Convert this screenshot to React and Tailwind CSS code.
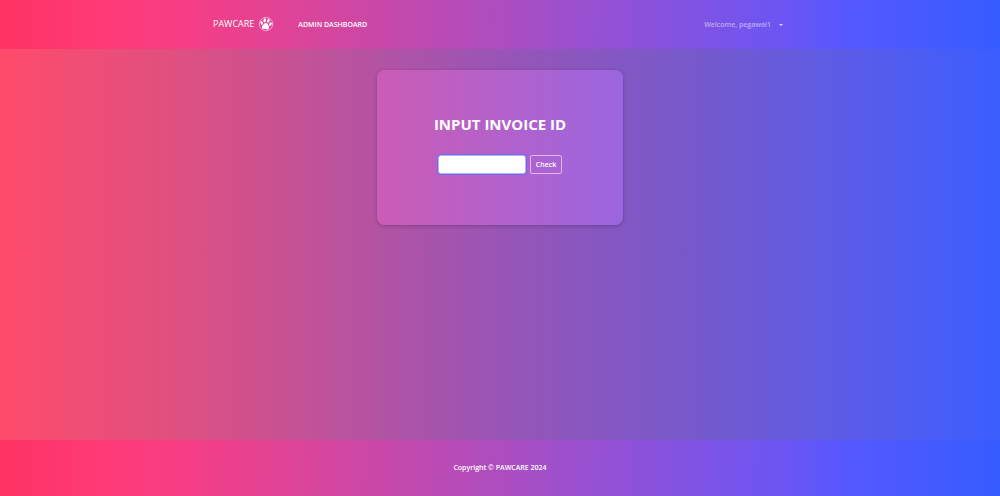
function PawLogo() {
  return (
    <svg viewBox="0 0 32 32" className="size-4" aria-hidden="true">
      <circle cx="16" cy="16" r="13.5" fill="none" stroke="#f0c4ee" strokeWidth="1.5" />
      <g fill="#fff" transform="rotate(8 16 16)">
        <ellipse cx="12.4" cy="9" rx="2.6" ry="4.2" transform="rotate(-6 12.4 9)" />
        <ellipse cx="19.6" cy="9" rx="2.6" ry="4.2" transform="rotate(6 19.6 9)" />
        <ellipse cx="7.2" cy="15" rx="2.4" ry="3.7" transform="rotate(-22 7.2 15)" />
        <ellipse cx="24.8" cy="15" rx="2.4" ry="3.7" transform="rotate(22 24.8 15)" />
        <path d="M16 14.200c-3 0-4.200 2.800-6 5.400-1.800 2.700-1.400 6.800 1.600 7.100 1.700.1 2.800-1.200 4.400-1.200s2.700 1.300 4.400 1.200c3-.3 3.400-4.400 1.600-7.100C20.200 17 19 14.200 16 14.200z" />
      </g>
    </svg>
  );
}

const barBackground =
  "bg-[linear-gradient(91deg,#ff3364_0%,#ff3a78_11%,#f83d84_18%,#d9459b_31%,#a44fc8_54%,#6a55f5_79%,#5558ff_85%,#355cff_100%)]";

export default function App() {
  return (
    <div className="flex min-h-screen flex-col font-['Open_Sans','Noto_Sans',sans-serif] text-white">
      <header className={`${barBackground} h-[49px] shrink-0`}>
        <nav className="mx-auto flex h-full w-full max-w-[574px] items-center">
          <a href="#home" className="flex items-center gap-1 pb-0.5 text-[9px] leading-4">
            PAWCARE
            <PawLogo />
          </a>
          <a href="#dashboard" className="ml-6 text-[7px] leading-4 font-semibold">
            ADMIN DASHBOARD
          </a>
          <button
            type="button"
            className="ml-auto flex items-center gap-2 pr-1 text-[7px] leading-4 font-semibold text-white/50"
          >
            Welcome, pegawai1
            <svg viewBox="0 0 4 2" className="h-0.5 w-1" aria-hidden="true">
              <path d="M0 0h4L2 2z" fill="#e2d9ff" />
            </svg>
          </button>
        </nav>
      </header>

      <main className="flex grow flex-col items-center bg-[linear-gradient(90deg,#ff4b6b_0%,#e0507f_17%,#c0529a_32%,#9855b6_50%,#7559cc_70%,#5b5ce8_85%,#3b5eff_100%)] pt-[21px]">
        <section className="flex w-full max-w-[246px] flex-col items-center rounded-lg bg-[linear-gradient(90deg,#cb5cb5_0%,#b361cb_50%,#9b66df_100%)] pt-11 pb-[51px] shadow-[0_1px_4px_#0000003a]">
          <h1 className="text-[15px] leading-5 font-bold">INPUT INVOICE ID</h1>
          <form className="mt-[21px] flex gap-1" onSubmit={(event) => event.preventDefault()}>
            <input
              type="text"
              aria-label="Invoice ID"
              className="h-[19px] w-[88px] rounded-[3px] border border-[#aab8fa] bg-white px-1.5 text-[8px] text-gray-800 shadow-[0_0_0_1px_#7868e5] outline-none"
            />
            <button
              type="submit"
              className="h-[19px] w-8 rounded-[2px] border border-[#e3b5ec] text-[7px] leading-4 font-semibold"
            >
              Check
            </button>
          </form>
        </section>
      </main>

      <footer className={`${barBackground} flex h-14 shrink-0 items-center justify-center`}>
        <p className="text-[7px] leading-4 font-semibold">Copyright © PAWCARE 2024</p>
      </footer>
    </div>
  );
}
